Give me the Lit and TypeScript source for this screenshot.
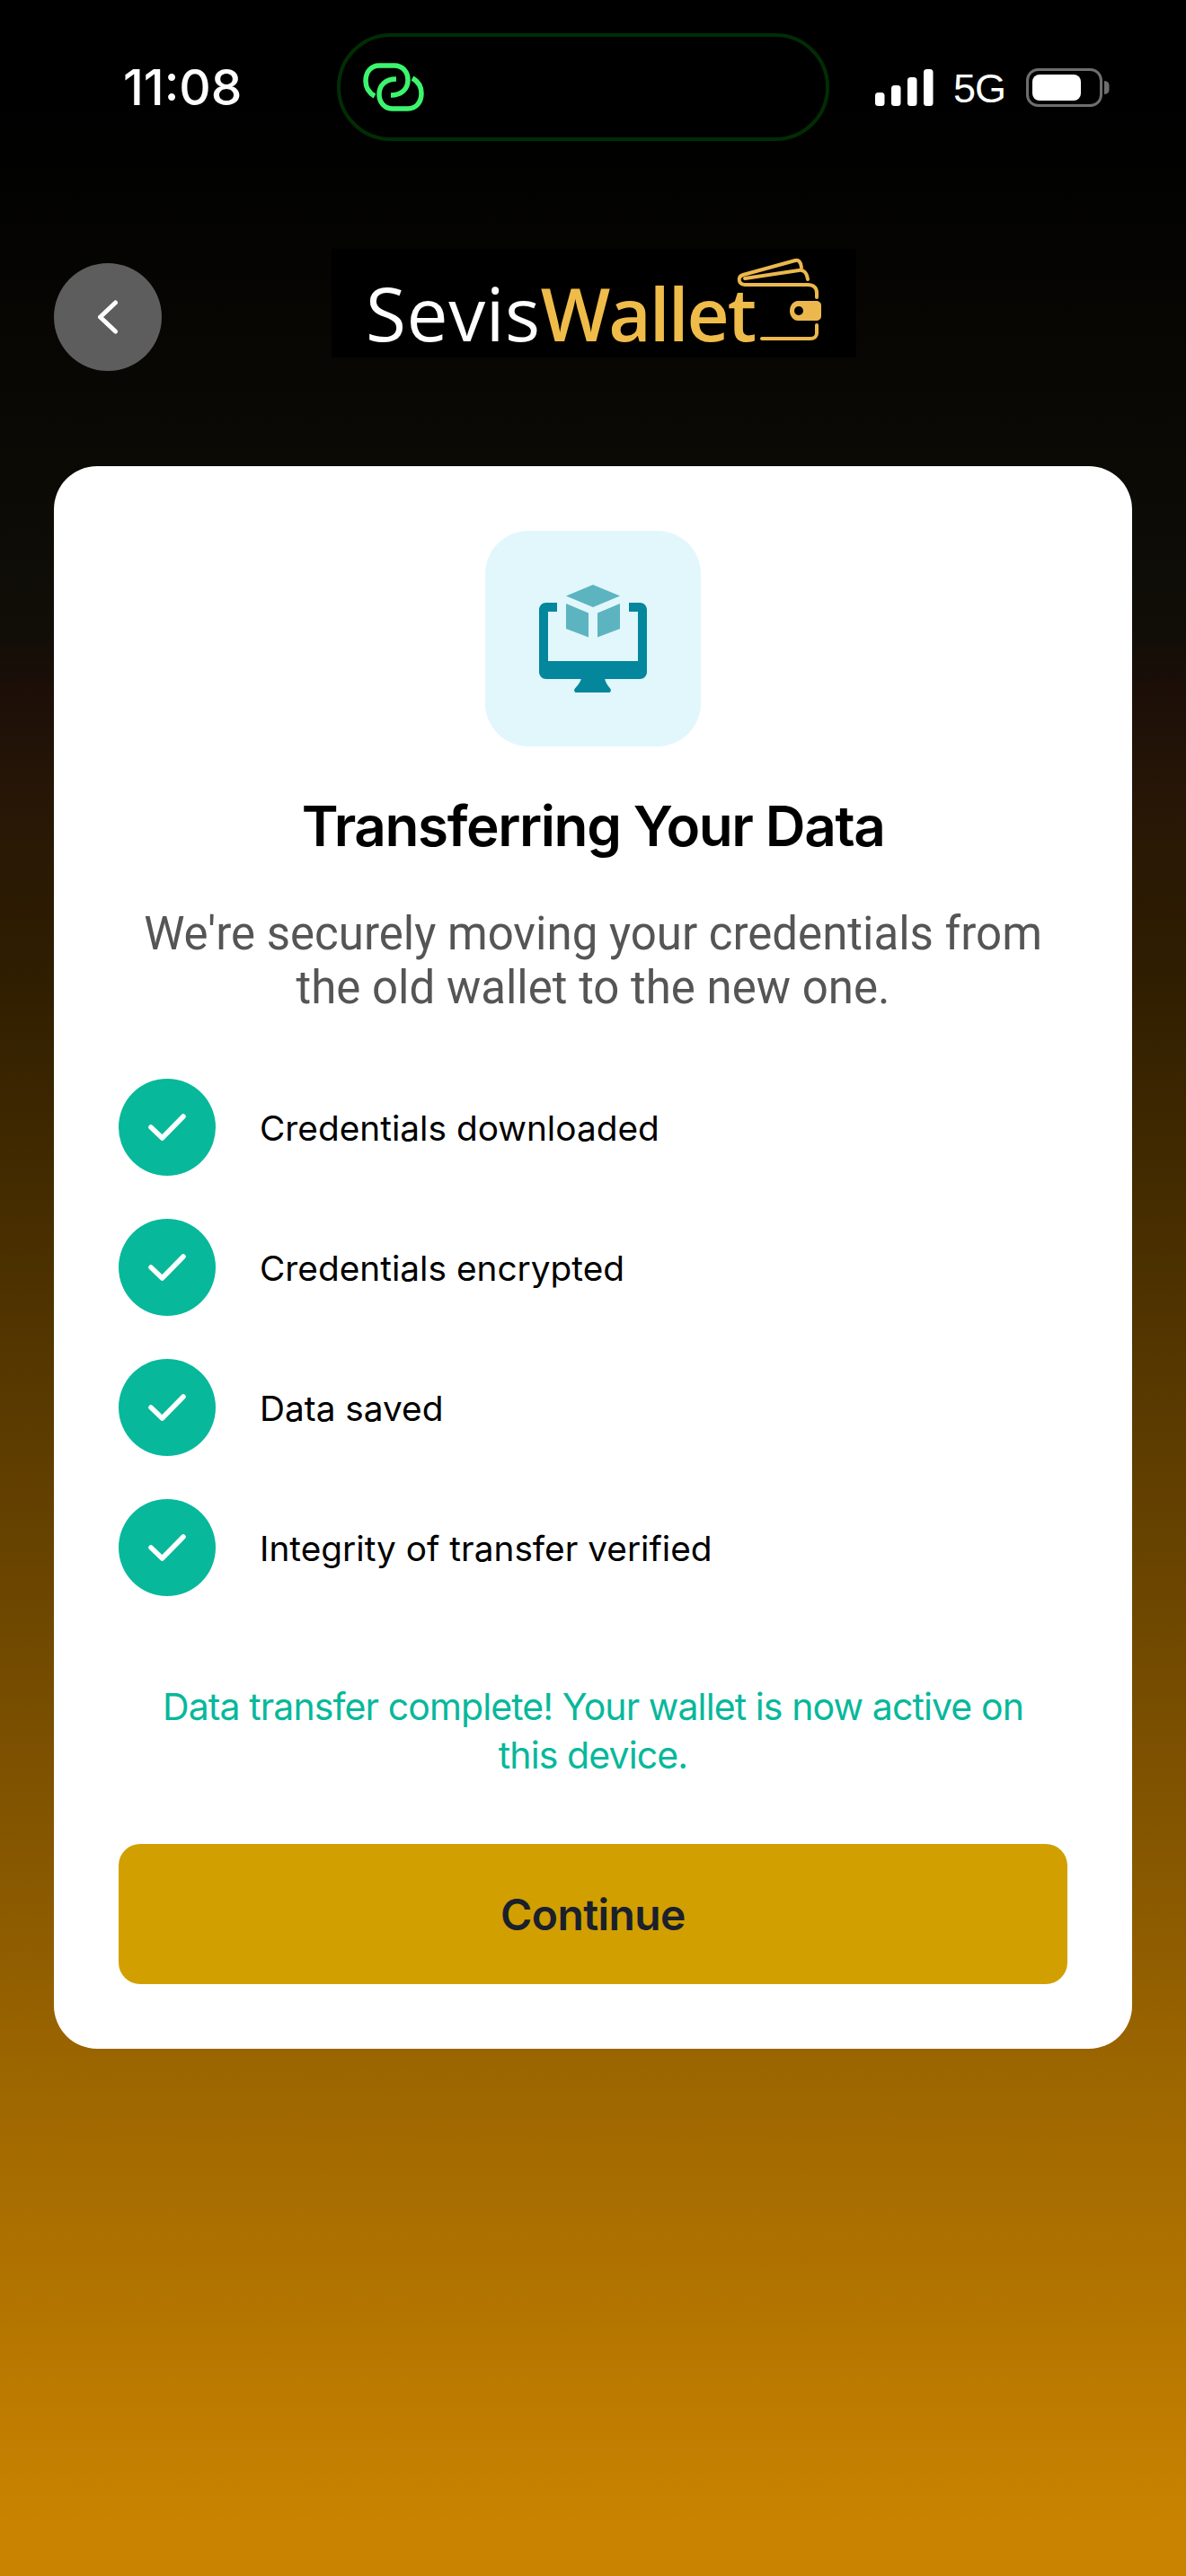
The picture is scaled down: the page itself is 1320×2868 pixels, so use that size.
import { LitElement, css, html } from 'lit'
import { customElement } from 'lit/decorators.js'

const STEPS = [
  'Credentials downloaded',
  'Credentials encrypted',
  'Data saved',
  'Integrity of transfer verified',
]

@customElement('app-root')
export class AppRoot extends LitElement {
  renderLinkIcon() {
    return html`
      <svg width="68" height="54" viewBox="0 0 68 54" fill="none" stroke="#3cf56e" stroke-width="5.500">
        <path d="M13 37C6 33 3 27 3 20 3 10 9 3 18 3h17c9 0 15 7 15 16 0 10-7 17-19 17" />
        <path d="M55 17c7 4 10 10 10 17 0 10-6 17-15 17H33c-9 0-15-7-15-16 0-10 7-17 19-17" />
      </svg>
    `
  }

  renderMonitorIcon() {
    return html`
      <svg width="120" height="120" viewBox="0 0 120 120">
        <path fill="#04879c" d="M8 20h12v10H10v55h100V30h-10V20h12c4.500 0 8 3.500 8 8v69c0 4.500-3.500 8-8 8H8c-4.500 0-8-3.500-8-8V28c0-4.500 3.500-8 8-8z" />
        <path fill="#04879c" d="M47 104h26c.8 5 3.500 8.500 6.500 12 .8 1.500.2 4-1.500 4H41c-1.700 0-2.300-2.500-1.500-4 3-3.500 6.700-7 7.500-12z" />
        <path fill="#5cb4c1" d="M60 0l30 12.500L60 25 30 12.500z" />
        <path fill="#5cb4c1" d="M30 21l25 10.500v27L30 49z" />
        <path fill="#5cb4c1" d="M90 21L65 31.500v27L90 49z" />
      </svg>
    `
  }

  renderStep(label: string) {
    return html`
      <li class="step">
        <span class="step-badge">
          <svg width="42" height="30" viewBox="0 0 42 30" fill="none" stroke="#fff" stroke-width="5.500" stroke-linecap="round" stroke-linejoin="round">
            <path d="M3 15l12.500 12L39 3" />
          </svg>
        </span>
        <span class="step-label">${label}</span>
      </li>
    `
  }

  render() {
    return html`
      <div class="screen">
        <header class="status-bar">
          <span class="time">11:08</span>
          <div class="island">${this.renderLinkIcon()}</div>
          <div class="status-right">
            <svg width="65" height="41" viewBox="0 0 65 41" fill="#fff">
              <rect x="0" y="26" width="10.500" height="15" rx="3.500" />
              <rect x="18" y="18" width="10.500" height="23" rx="3.500" />
              <rect x="36" y="9" width="10.500" height="32" rx="3.500" />
              <rect x="54" y="0" width="10.500" height="41" rx="3.500" />
            </svg>
            <span class="network">5G</span>
            <svg width="93" height="43" viewBox="0 0 93 43" fill="none">
              <rect x="1.500" y="1.500" width="82" height="40" rx="12" stroke="#6e6e6e" stroke-width="3" />
              <rect x="7" y="7" width="54" height="29" rx="8" fill="#fff" />
              <path d="M87 14c3.500.3 5.500 2 5.500 5v5c0 3-2 4.700-5.500 5z" fill="#6e6e6e" />
            </svg>
          </div>
        </header>

        <div class="top-row">
          <button class="back" aria-label="Back">
            <svg width="24" height="38" viewBox="0 0 24 38" fill="none" stroke="#fff" stroke-width="5" stroke-linecap="round" stroke-linejoin="round">
              <path d="M20.500 3L3.500 19l17 16" />
            </svg>
          </button>
          <div class="logo">
            <span class="logo-text"><span class="sevis">Sevis</span><span class="wallet">Wallet</span></span>
            <svg class="logo-mark" width="94" height="92" viewBox="0 0 94 92" fill="none" stroke="#ecb84e" stroke-width="4" stroke-linejoin="round" stroke-linecap="round">
              <path d="M72 11c-.5-6-3-9-7-8L7 19c-6 2-6 10 2 11h70c6 0 10 3 10 9v5" />
              <path d="M9 23l60-9c6-1 9 3 10 10" />
              <path d="M89 75v9c0 4-3 6-7 6H28" />
              <path d="M68 48h20c3.500 0 6 2 6 5v12c0 3-2.500 5-6 5H68c-5 0-9-5-9-11s4-11 9-11z" fill="#ecb84e" stroke="none" />
              <circle cx="69" cy="59" r="5" fill="#000" stroke="none" />
            </svg>
          </div>
        </div>

        <main class="card">
          <div class="icon-tile">${this.renderMonitorIcon()}</div>
          <h1 class="title">Transferring Your Data</h1>
          <p class="subtitle">We're securely moving your credentials from the old wallet to the new one.</p>
          <ul class="steps">${STEPS.map((s) => this.renderStep(s))}</ul>
          <p class="complete">Data transfer complete! Your wallet is now active on this device.</p>
          <button class="continue">Continue</button>
        </main>
      </div>
    `
  }

  static styles = css`
    :host {
      display: block;
      font-family: Inter, "Liberation Sans", sans-serif;
    }
    .screen {
      box-sizing: border-box;
      width: 1320px;
      height: 2868px;
      background: linear-gradient(180deg, #000 0%, #000 4%, #100e07 24.400%, #1c0f08 26.800%, #281706 31.400%, #2f1e00 38%, #c98300 98%);
      padding: 37px 60px 0;
    }
    .status-bar {
      display: flex;
      align-items: center;
      height: 120px;
    }
    .time {
      box-sizing: border-box;
      width: 315px;
      padding-left: 77px;
      color: #fff;
      font-size: 55px;
      font-weight: 500;
    }
    .island {
      box-sizing: border-box;
      width: 548px;
      height: 120px;
      border: 4px solid #012d03;
      border-radius: 60px;
      background: #000;
      display: flex;
      align-items: center;
      padding-left: 25px;
    }
    .status-right {
      display: flex;
      align-items: center;
      margin-left: 51px;
    }
    .network {
      margin: 4px 23px 0 22px;
      color: #fff;
      font-family: "Liberation Sans", sans-serif;
      font-size: 45px;
      letter-spacing: -1px;
    }
    .top-row {
      display: flex;
      align-items: flex-start;
      margin-top: 120px;
      height: 242px;
    }
    .back {
      width: 120px;
      height: 120px;
      margin-top: 16px;
      padding: 0;
      border: none;
      border-radius: 50%;
      background: #5d5d5d;
      display: flex;
      align-items: center;
      justify-content: center;
    }
    .logo {
      box-sizing: border-box;
      width: 584px;
      height: 121px;
      margin-left: 189px;
      padding: 10px 0 0 38px;
      background: #000;
      display: flex;
      align-items: flex-start;
    }
    .logo-text {
      margin-top: 20px;
      font-family: "Open Sans", sans-serif;
      font-size: 82px;
      font-weight: 500;
      line-height: 1;
      white-space: nowrap;
    }
    .sevis {
      color: #fff;
      letter-spacing: 0.600px;
    }
    .wallet {
      color: #efbc4a;
      font-weight: 600;
      letter-spacing: -2px;
    }
    .logo-mark {
      margin-left: -20px;
      flex: none;
    }
    .card {
      box-sizing: border-box;
      width: 1200px;
      height: 1762px;
      padding: 72px;
      background: #fff;
      border-radius: 48px;
      display: flex;
      flex-direction: column;
      align-items: center;
    }
    .icon-tile {
      flex: none;
      width: 240px;
      height: 240px;
      border-radius: 48px;
      background: #e1f7fb;
      display: flex;
      align-items: center;
      justify-content: center;
    }
    .title {
      margin: 53px 0 0;
      font-size: 62px;
      line-height: 72px;
      font-weight: 600;
      color: #000;
      letter-spacing: -1.400px;
    }
    .subtitle {
      margin: 54px 0 0;
      width: 1040px;
      text-align: center;
      font-family: Roboto, sans-serif;
      font-size: 51px;
      line-height: 60px;
      color: #555;
    }
    .steps {
      list-style: none;
      margin: 71px 0 0;
      padding: 0;
      width: 100%;
      display: flex;
      flex-direction: column;
      gap: 48px;
    }
    .step {
      display: flex;
      align-items: center;
      gap: 49px;
    }
    .step-badge {
      width: 108px;
      height: 108px;
      border-radius: 50%;
      background: #07b89b;
      display: flex;
      align-items: center;
      justify-content: center;
    }
    .step-label {
      font-size: 38.800px;
      color: #000;
    }
    .complete {
      margin: 96px 0 0;
      width: 1000px;
      text-align: center;
      font-size: 41px;
      line-height: 54px;
      letter-spacing: -0.900px;
      color: #07b89b;
    }
    .continue {
      flex: none;
      margin-top: 72px;
      width: 100%;
      height: 156px;
      border: none;
      border-radius: 24px;
      background: #d29f00;
      color: #1a202c;
      font-family: inherit;
      font-size: 48px;
      font-weight: 600;
      letter-spacing: -0.600px;
    }
  `
}
